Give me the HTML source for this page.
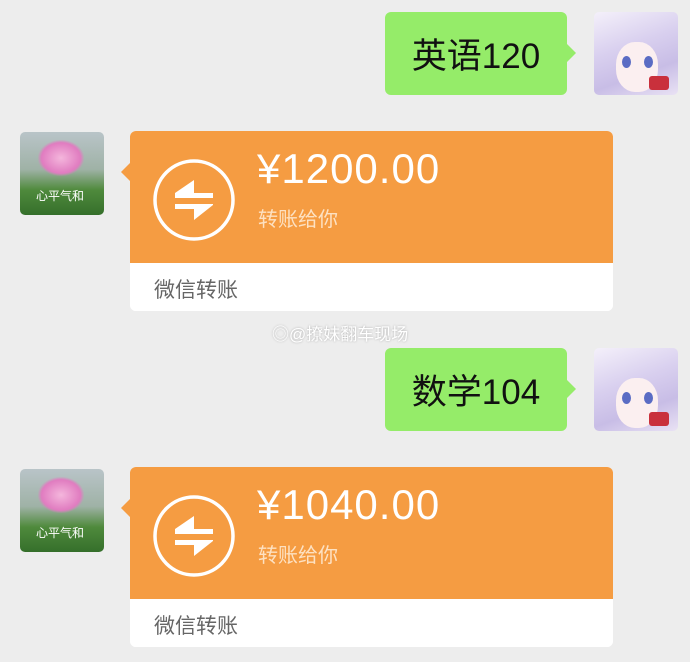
<!DOCTYPE html>
<html><head><meta charset="utf-8"><style>
body{margin:0;width:690px;height:662px;background:#ededed;position:relative;overflow:hidden;font-family:"Liberation Sans","Noto Sans CJK SC",sans-serif}
.abs{position:absolute}
.green{background:#95ec69;border-radius:6px;color:#111;font-size:35px;display:flex;align-items:center;justify-content:center}
.green:after{content:"";position:absolute;right:-9px;top:32px;border:9px solid transparent;border-right:0;border-left-color:#95ec69}
.av-r{border-radius:5px;background:linear-gradient(160deg,#f4f0fa 0%,#d9d0ef 40%,#c8bde6 70%,#e9e2f4 100%);overflow:hidden}
.av-l{border-radius:5px;background:linear-gradient(180deg,#b9c4c8 0%,#9fb2a6 45%,#4f8a3c 70%,#356f2b 100%);overflow:hidden}
.card{border-radius:6px;background:#fff}
.card .top{background:#f59c42;height:132px;position:relative}
.card:before{content:"";position:absolute;left:-9px;top:32px;border:9px solid transparent;border-left:0;border-right-color:#f59c42}
.amt{position:absolute;left:127px;top:14px;color:#fff;font-size:42px;letter-spacing:1px}
.sub{position:absolute;left:128px;top:72px;color:#fde1c2;font-size:20px}
.foot{color:#666;font-size:21px;padding:11px 0 0 24px;height:48px;box-sizing:border-box}
</style></head><body>

<div class="abs green" style="left:385px;top:12px;width:182px;height:83px">英语120</div>
<div class="abs av-r" style="left:594px;top:12px;width:84px;height:83px">
 <div class="abs" style="left:22px;top:30px;width:42px;height:50px;background:#fbeff0;border-radius:45%"></div>
 <div class="abs" style="left:28px;top:44px;width:9px;height:12px;background:#5a6cc4;border-radius:50%"></div>
 <div class="abs" style="left:50px;top:44px;width:9px;height:12px;background:#5a6cc4;border-radius:50%"></div>
 <div class="abs" style="left:55px;top:64px;width:20px;height:14px;background:#c9303c;border-radius:3px"></div>
</div>

<div class="abs av-l" style="left:20px;top:132px;width:84px;height:83px">
 <div class="abs" style="left:18px;top:8px;width:46px;height:36px;background:radial-gradient(#f4b6dc,#e07cc0 60%,transparent 72%)"></div>
 <div class="abs" style="left:16px;top:55px;color:#fff;font-size:12px">心平气和</div>
</div>
<div class="abs card" style="left:130px;top:131px;width:483px;height:180px">
 <div class="top" style="border-radius:6px 6px 0 0">
  <svg class="abs" style="left:22px;top:27px" width="84" height="84" viewBox="0 0 84 84"><circle cx="42" cy="42" r="39" fill="none" stroke="#fff" stroke-width="3.5"/><path d="M23 35L42 22V35H61V40H23Z M61 47L42 62V51H23V46H61Z" fill="#fff"/></svg>
  <div class="amt">¥1200.00</div><div class="sub">转账给你</div>
 </div>
 <div class="foot" style="background:#fff;border-radius:0 0 6px 6px">微信转账</div>
</div>

<div class="abs" style="left:272px;top:320px;color:#fff;font-size:17px;text-shadow:0 0 2px #aaa">◎@撩妹翻车现场</div>

<div class="abs green" style="left:385px;top:348px;width:182px;height:83px">数学104</div>
<div class="abs av-r" style="left:594px;top:348px;width:84px;height:83px">
 <div class="abs" style="left:22px;top:30px;width:42px;height:50px;background:#fbeff0;border-radius:45%"></div>
 <div class="abs" style="left:28px;top:44px;width:9px;height:12px;background:#5a6cc4;border-radius:50%"></div>
 <div class="abs" style="left:50px;top:44px;width:9px;height:12px;background:#5a6cc4;border-radius:50%"></div>
 <div class="abs" style="left:55px;top:64px;width:20px;height:14px;background:#c9303c;border-radius:3px"></div>
</div>

<div class="abs av-l" style="left:20px;top:469px;width:84px;height:83px">
 <div class="abs" style="left:18px;top:8px;width:46px;height:36px;background:radial-gradient(#f4b6dc,#e07cc0 60%,transparent 72%)"></div>
 <div class="abs" style="left:16px;top:55px;color:#fff;font-size:12px">心平气和</div>
</div>
<div class="abs card" style="left:130px;top:467px;width:483px;height:180px">
 <div class="top" style="border-radius:6px 6px 0 0">
  <svg class="abs" style="left:22px;top:27px" width="84" height="84" viewBox="0 0 84 84"><circle cx="42" cy="42" r="39" fill="none" stroke="#fff" stroke-width="3.5"/><path d="M23 35L42 22V35H61V40H23Z M61 47L42 62V51H23V46H61Z" fill="#fff"/></svg>
  <div class="amt">¥1040.00</div><div class="sub">转账给你</div>
 </div>
 <div class="foot" style="background:#fff;border-radius:0 0 6px 6px">微信转账</div>
</div>
</body></html>
